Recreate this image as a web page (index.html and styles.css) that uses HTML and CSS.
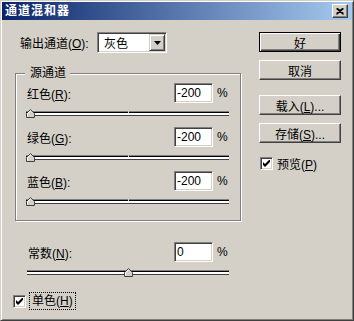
FILE: index.html
```html
<!DOCTYPE html>
<html lang="zh-CN">
<head>
    <meta charset="UTF-8">
    <title>通道混和器</title>
    <link rel="stylesheet" href="styles.css">
</head>
<body>
    <div class="window">
        <div class="titlebar">
            <span class="title">通道混和器</span>
            <button class="close-btn" type="button" aria-label="关闭">
                <svg width="8" height="7" viewBox="0 0 8 7"><path d="M0.5 0.5 L7.5 6.5 M1.5 0.5 L7.5 5.5 M7.5 0.5 L0.5 6.5 M6.5 0.5 L0.5 5.5" stroke="#000" stroke-width="1.1"/></svg>
            </button>
        </div>

        <div class="content">
            <div class="left">
                <div class="output-row">
                    <label class="output-label">输出通道(<u>O</u>):</label>
                    <div class="select">
                        <span class="select-value">灰色</span>
                        <span class="select-arrow">
                            <svg width="7" height="4" viewBox="0 0 7 4"><path d="M0 0 H7 L3.5 4 Z" fill="#000"/></svg>
                        </span>
                    </div>
                </div>

                <div class="group">
                    <span class="legend">源通道</span>

                    <div class="channel">
                        <div class="field-row">
                            <label>红色(<u>R</u>):</label>
                            <input class="num" type="text" value="-200">
                            <span class="pct">%</span>
                        </div>
                        <div class="slider">
                            <div class="track tick">
                                <span class="thumb" style="--v: 0"><svg width="9" height="9" viewBox="0 0 9 9"><path d="M0.5 8.5 V4.5 L4.5 0.5 L8.5 4.5 V8.5 Z" fill="#d4d0c8" stroke="#404040"/><path d="M1.5 7.5 V4.9 L4.5 1.9" fill="none" stroke="#fff"/></svg></span>
                            </div>
                        </div>
                    </div>

                    <div class="channel">
                        <div class="field-row">
                            <label>绿色(<u>G</u>):</label>
                            <input class="num" type="text" value="-200">
                            <span class="pct">%</span>
                        </div>
                        <div class="slider">
                            <div class="track tick">
                                <span class="thumb" style="--v: 0"><svg width="9" height="9" viewBox="0 0 9 9"><path d="M0.5 8.5 V4.5 L4.5 0.5 L8.5 4.5 V8.5 Z" fill="#d4d0c8" stroke="#404040"/><path d="M1.5 7.5 V4.9 L4.5 1.9" fill="none" stroke="#fff"/></svg></span>
                            </div>
                        </div>
                    </div>

                    <div class="channel">
                        <div class="field-row">
                            <label>蓝色(<u>B</u>):</label>
                            <input class="num" type="text" value="-200">
                            <span class="pct">%</span>
                        </div>
                        <div class="slider">
                            <div class="track tick">
                                <span class="thumb" style="--v: 0"><svg width="9" height="9" viewBox="0 0 9 9"><path d="M0.5 8.5 V4.5 L4.5 0.5 L8.5 4.5 V8.5 Z" fill="#d4d0c8" stroke="#404040"/><path d="M1.5 7.5 V4.9 L4.5 1.9" fill="none" stroke="#fff"/></svg></span>
                            </div>
                        </div>
                    </div>
                </div>

                <div class="constant">
                    <div class="field-row">
                        <label>常数(<u>N</u>):</label>
                        <input class="num" type="text" value="0">
                        <span class="pct">%</span>
                    </div>
                    <div class="slider">
                        <div class="track">
                            <span class="thumb" style="--v: 0.5"><svg width="9" height="9" viewBox="0 0 9 9"><path d="M0.5 8.5 V4.5 L4.5 0.5 L8.5 4.5 V8.5 Z" fill="#d4d0c8" stroke="#404040"/><path d="M1.5 7.5 V4.9 L4.5 1.9" fill="none" stroke="#fff"/></svg></span>
                        </div>
                    </div>
                </div>

                <div class="check-row mono">
                    <span class="checkbox"><svg width="7" height="7" viewBox="0 0 7 7"><polygon points="0,2 2,4 7,-1 7,2 2,7 0,5" fill="#000"/></svg></span>
                    <label class="focus">单色(<u>H</u>)</label>
                </div>
            </div>

            <div class="right">
                <button class="btn default" type="button">好</button>
                <button class="btn" type="button">取消</button>
                <button class="btn gap" type="button">载入(<u>L</u>)...</button>
                <button class="btn" type="button">存储(<u>S</u>)...</button>
                <div class="check-row preview">
                    <span class="checkbox"><svg width="7" height="7" viewBox="0 0 7 7"><polygon points="0,2 2,4 7,-1 7,2 2,7 0,5" fill="#000"/></svg></span>
                    <label>预览(<u>P</u>)</label>
                </div>
            </div>
        </div>
    </div>
</body>
</html>
```

FILE: styles.css
```css
body {
    margin: 0;
    font-family: "Liberation Sans", "Noto Sans CJK SC", sans-serif;
    font-size: 12px;
    color: #000;
}

u {
    text-decoration: underline;
}

.window {
    width: 354px;
    height: 321px;
    box-sizing: border-box;
    padding: 1px;
    background: #d4d0c8;
    border: 1px solid;
    border-color: #d4d0c8 #404040 #404040 #d4d0c8;
    box-shadow: inset 1px 1px #fff, inset -1px -1px #808080;
}

/* title bar */
.titlebar {
    height: 18px;
    display: flex;
    align-items: center;
    justify-content: space-between;
    padding: 0 4px 0 3px;
    background: linear-gradient(to right, #0a246a, #a6caf0);
}

.title {
    color: #fff;
    font-weight: bold;
    letter-spacing: 1px;
    line-height: 18px;
}

.close-btn {
    width: 16px;
    height: 14px;
    padding: 0;
    box-sizing: border-box;
    display: flex;
    align-items: center;
    justify-content: center;
    background: #d4d0c8;
    border: 1px solid;
    border-color: #fff #404040 #404040 #fff;
    box-shadow: inset -1px -1px #808080;
}

/* main area */
.content {
    display: flex;
    padding: 12px 0 0 11px;
}

.left {
    width: 228px;
}

.right {
    width: 82px;
    margin-left: 18px;
    display: flex;
    flex-direction: column;
}

.output-row {
    display: flex;
    align-items: center;
    height: 21px;
    padding-left: 7px;
}

.output-label {
    width: 77px;
}

.select {
    width: 70px;
    height: 21px;
    box-sizing: border-box;
    display: flex;
    align-items: center;
    padding: 1px;
    background: #fff;
    border: 1px solid;
    border-color: #808080 #fff #fff #808080;
    box-shadow: inset 1px 1px #404040, inset -1px -1px #d4d0c8;
}

.select-value {
    flex: 1;
    padding-left: 5px;
}

.select-arrow {
    width: 16px;
    height: 17px;
    box-sizing: border-box;
    display: flex;
    align-items: center;
    justify-content: center;
    background: #d4d0c8;
    border: 1px solid;
    border-color: #d4d0c8 #404040 #404040 #d4d0c8;
    box-shadow: inset 1px 1px #fff, inset -1px -1px #808080;
}

/* source channels group */
.group {
    position: relative;
    width: 226px;
    box-sizing: border-box;
    margin: 20px 0 0 2px;
    padding: 9px 11px 5px 10px;
    border: 1px solid #808080;
    box-shadow: 1px 1px #fff, inset 1px 1px #fff;
}

.legend {
    position: absolute;
    top: -8px;
    left: 9px;
    padding: 0 4px 0 5px;
    line-height: 15px;
    background: #d4d0c8;
}

.field-row {
    display: flex;
    align-items: center;
    height: 20px;
}

.field-row label {
    flex: 1;
    padding-left: 1px;
}

.num {
    width: 39px;
    height: 20px;
    box-sizing: border-box;
    margin: 0;
    padding: 0 2px;
    font: inherit;
    color: #000;
    background: #fff;
    border: 1px solid;
    border-color: #808080 #fff #fff #808080;
    box-shadow: inset 1px 1px #404040, inset -1px -1px #d4d0c8;
    outline: none;
}

.pct {
    width: 12px;
    margin-left: 4px;
}

.slider {
    height: 24px;
    box-sizing: border-box;
    padding-top: 8px;
}

.track {
    position: relative;
    height: 5px;
    box-sizing: border-box;
    background: #fff;
    border-top: 1px solid #808080;
    border-bottom: 1px solid #404040;
    box-shadow: inset 0 1px #000;
}

.tick::after {
    content: "";
    position: absolute;
    left: 50%;
    top: -1px;
    width: 1px;
    height: 2px;
    background: #d4d0c8;
}

.thumb {
    position: absolute;
    top: -3px;
    left: calc(var(--v) * (100% - 9px));
    width: 9px;
    height: 9px;
    z-index: 1;
}

.thumb svg {
    display: block;
}

/* constant */
.constant {
    margin-top: 21px;
    padding: 0 12px 0 14px;
}

/* checkboxes */
.check-row {
    display: flex;
    align-items: center;
}

.mono {
    height: 18px;
    margin-top: 6px;
}

.preview {
    height: 13px;
    margin-top: 14px;
    padding-left: 1px;
}

.checkbox {
    width: 13px;
    height: 13px;
    box-sizing: border-box;
    display: flex;
    align-items: center;
    justify-content: center;
    background: #fff;
    border: 1px solid;
    border-color: #808080 #fff #fff #808080;
    box-shadow: inset 1px 1px #404040, inset -1px -1px #d4d0c8;
}

.check-row label {
    margin-left: 4px;
}

.mono .focus {
    margin-left: 3px;
    padding: 0 2px;
    line-height: 16px;
    border: 1px dotted #000;
}

/* buttons */
.btn {
    width: 82px;
    height: 20px;
    box-sizing: border-box;
    margin: 8px 0 0;
    padding: 0;
    font: inherit;
    color: #000;
    background: #d4d0c8;
    border: 1px solid;
    border-color: #fff #404040 #404040 #fff;
    box-shadow: inset -1px -1px #808080;
}

.btn.default {
    margin-top: 0;
    border-color: #000;
    box-shadow: inset 1px 1px #fff, inset -1px -1px #404040, inset -2px -2px #808080;
}

.btn.gap {
    margin-top: 15px;
}
```
